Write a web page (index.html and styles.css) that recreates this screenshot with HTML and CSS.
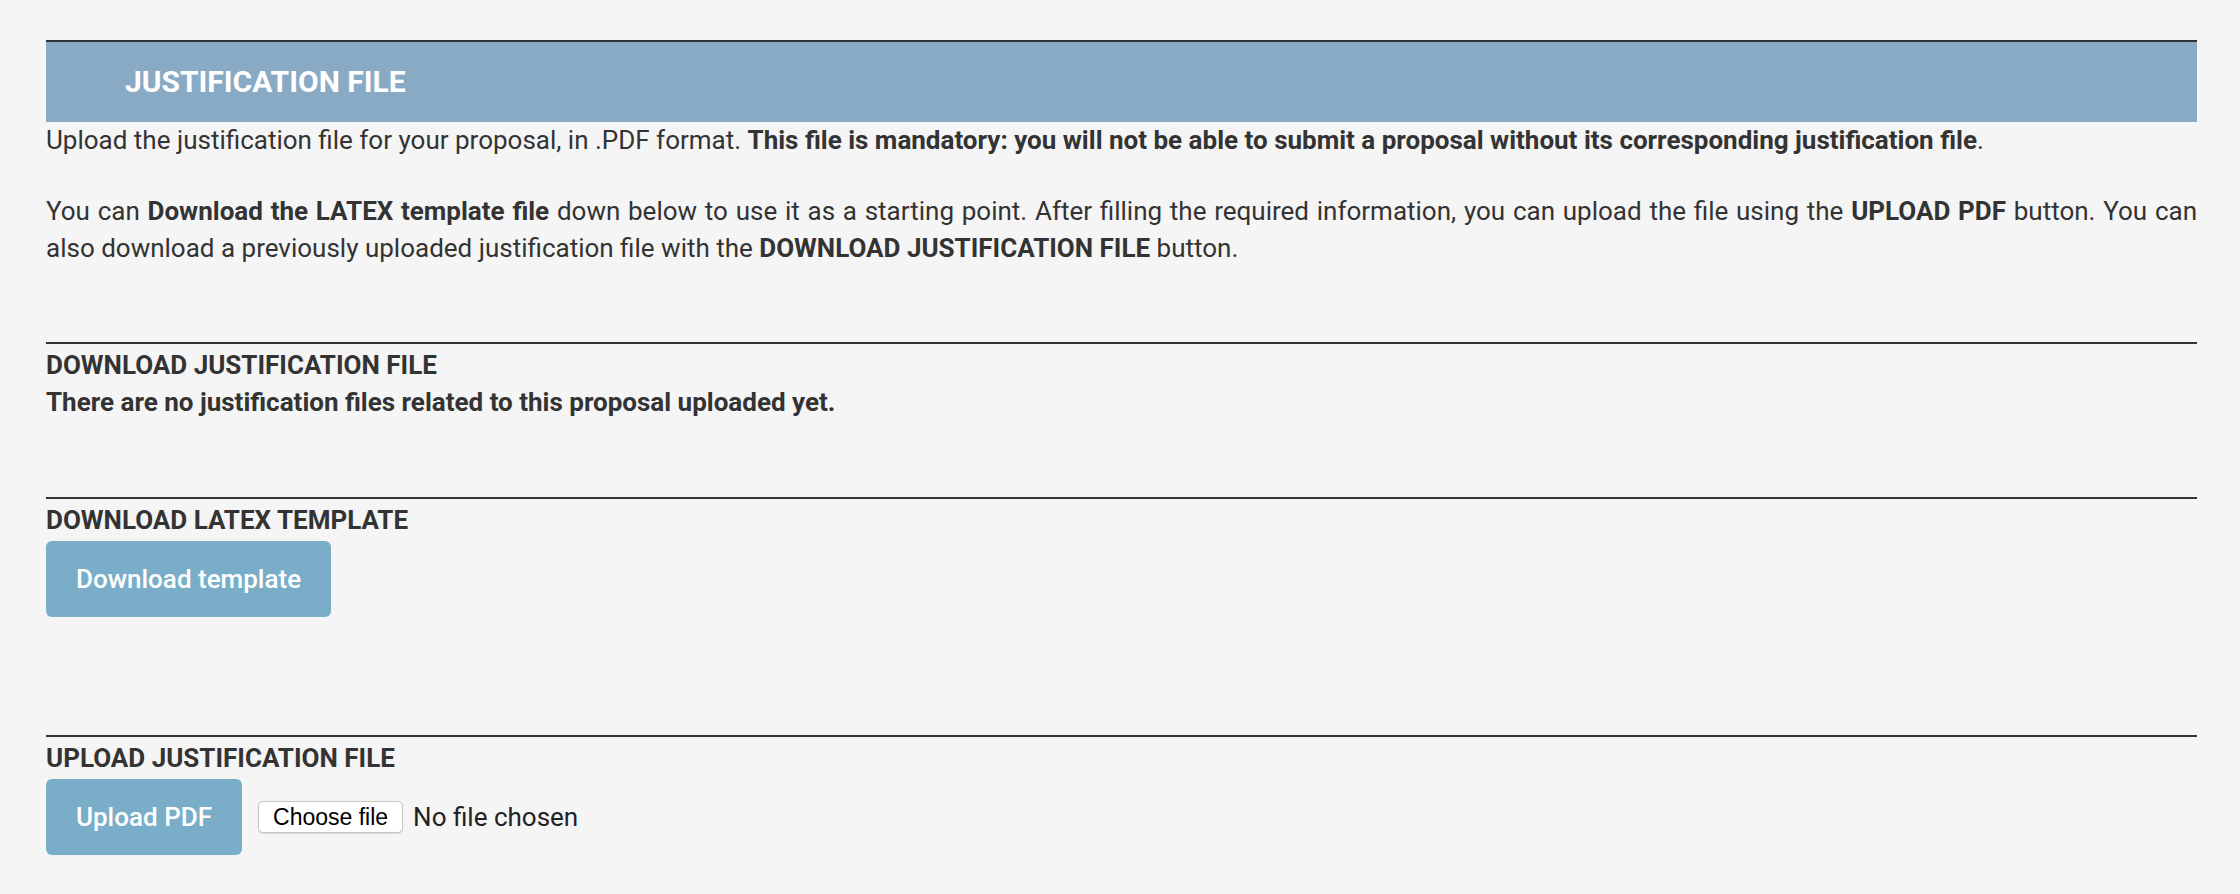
FILE: index.html
```html
<!DOCTYPE html>
<html lang="en">
<head>
  <meta charset="UTF-8">
  <meta name="viewport" content="width=device-width, initial-scale=1.0">
  <title>Justification File</title>
  <link rel="stylesheet" href="styles.css">
</head>
<body>
  <div class="panel">
    <div class="panel-title">JUSTIFICATION FILE</div>
    <p class="intro">Upload the justification file for your proposal, in .PDF format. <b>This file is mandatory: you will not be able to submit a proposal without its corresponding justification file</b>.</p>
    <p class="intro second">You can <b>Download the LATEX template file</b> down below to use it as a starting point. After filling the required information, you can upload the file using the <b>UPLOAD PDF</b> button. You can also download a previously uploaded justification file with the <b>DOWNLOAD JUSTIFICATION FILE</b> button.</p>

    <div class="section files">
      <h4>DOWNLOAD JUSTIFICATION FILE</h4>
      <p class="empty">There are no justification files related to this proposal uploaded yet.</p>
    </div>

    <div class="section template">
      <h4>DOWNLOAD LATEX TEMPLATE</h4>
      <button class="btn">Download template</button>
    </div>

    <div class="section upload">
      <h4>UPLOAD JUSTIFICATION FILE</h4>
      <div class="upload-row">
        <button class="btn">Upload PDF</button>
        <label class="file-pick">
          <span class="file-btn">Choose file</span>
          <span class="file-name">No file chosen</span>
        </label>
      </div>
    </div>
  </div>
</body>
</html>
```
FILE: styles.css
```css
body {
  margin: 0;
  background: #f5f5f5;
  font-family: Roboto, 'Liberation Sans', Arial, sans-serif;
  font-size: 26px;
  line-height: 37px;
  color: #333;
}
.panel {
  margin: 40px 43px 0 46px;
  border-top: 2px solid #333;
}
.panel-title {
  background: #88aac4;
  color: #fff;
  font-size: 30px;
  font-weight: 700;
  height: 80px;
  line-height: 80px;
  padding-left: 79px;
}
.intro {
  margin: 0;
  text-align: justify;
}
.intro.second {
  margin-top: 34px;
}
.section {
  border-top: 2px solid #333;
  padding-top: 3px;
}
.section h4 {
  margin: 0;
  font-size: 26px;
  line-height: 37px;
  font-weight: 700;
}
.section.files {
  margin-top: 75px;
}
.section.template {
  margin-top: 76px;
}
.section.upload {
  margin-top: 118px;
}
.empty {
  margin: 0;
  font-weight: 700;
}
.btn {
  display: inline-block;
  margin-top: 2px;
  height: 76px;
  padding: 0 30px;
  background: #7aaec8;
  color: #fff;
  border: none;
  border-radius: 6px;
  font-family: inherit;
  font-size: 26px;
  font-weight: 500;
  line-height: 76px;
  cursor: pointer;
}
.upload-row {
  display: flex;
  align-items: center;
  gap: 16px;
}
.file-pick {
  display: flex;
  align-items: center;
  gap: 10px;
  margin-top: 2px;
}
.file-btn {
  display: inline-block;
  height: 30px;
  padding: 0 14px;
  background: #fff;
  border: 1px solid #c6c6c6;
  border-radius: 5px;
  box-shadow: 0 1px 1px rgba(0,0,0,0.12);
  color: #000;
  font-family: 'Liberation Sans', Arial, sans-serif;
  font-size: 23px;
  line-height: 30px;
}
.file-name {
  color: #222;
}
```
